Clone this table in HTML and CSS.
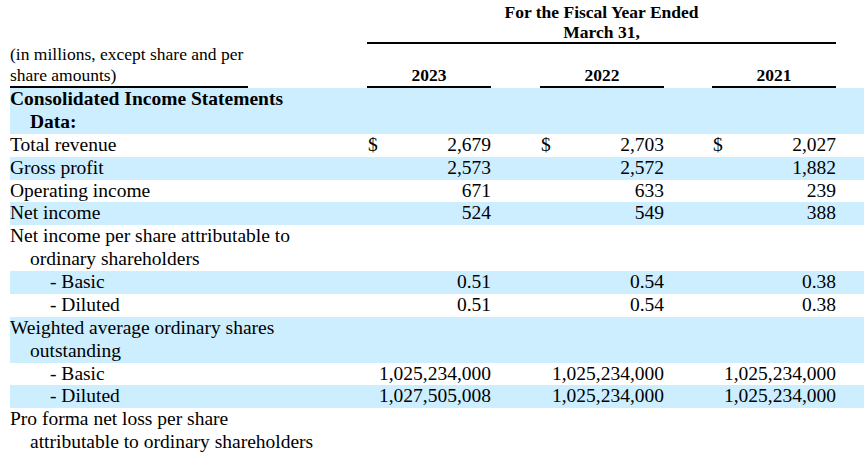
FILE: index.html
```html
<!DOCTYPE html>
<html lang="en">
<head>
<meta charset="utf-8">
<title>Selected Financial Data</title>
<link rel="stylesheet" href="styles.css">
</head>
<body>
<table class="fin">
  <colgroup>
    <col class="c-label">
    <col class="c-gap1">
    <col class="c-num">
    <col class="c-gap2">
    <col class="c-num">
    <col class="c-gap3">
    <col class="c-num">
    <col class="c-tail">
  </colgroup>
  <thead>
    <tr class="h1">
      <th colspan="2"></th>
      <th colspan="5" class="span-head">For the Fiscal Year Ended<br>March 31,</th>
      <th></th>
    </tr>
    <tr class="h2">
      <th class="unit">(in millions, except share and per share amounts)</th>
      <th></th>
      <th class="year">2023</th>
      <th></th>
      <th class="year">2022</th>
      <th></th>
      <th class="year">2021</th>
      <th></th>
    </tr>
  </thead>
  <tbody>
    <tr class="shade">
      <td colspan="2" class="label bold">Consolidated Income Statements<br>Data:</td>
      <td></td><td></td><td></td><td></td><td></td><td></td>
    </tr>
    <tr>
      <td colspan="2" class="label">Total revenue</td>
      <td><div class="amt"><span>$</span><span>2,679</span></div></td><td></td>
      <td><div class="amt"><span>$</span><span>2,703</span></div></td><td></td>
      <td><div class="amt"><span>$</span><span>2,027</span></div></td><td></td>
    </tr>
    <tr class="shade">
      <td colspan="2" class="label">Gross profit</td>
      <td class="num">2,573</td><td></td>
      <td class="num">2,572</td><td></td>
      <td class="num">1,882</td><td></td>
    </tr>
    <tr>
      <td colspan="2" class="label">Operating income</td>
      <td class="num">671</td><td></td>
      <td class="num">633</td><td></td>
      <td class="num">239</td><td></td>
    </tr>
    <tr class="shade">
      <td colspan="2" class="label">Net income</td>
      <td class="num">524</td><td></td>
      <td class="num">549</td><td></td>
      <td class="num">388</td><td></td>
    </tr>
    <tr>
      <td colspan="2" class="label">Net income per share attributable to<br>ordinary shareholders</td>
      <td></td><td></td><td></td><td></td><td></td><td></td>
    </tr>
    <tr class="shade">
      <td colspan="2" class="label sub">- Basic</td>
      <td class="num">0.51</td><td></td>
      <td class="num">0.54</td><td></td>
      <td class="num">0.38</td><td></td>
    </tr>
    <tr>
      <td colspan="2" class="label sub">- Diluted</td>
      <td class="num">0.51</td><td></td>
      <td class="num">0.54</td><td></td>
      <td class="num">0.38</td><td></td>
    </tr>
    <tr class="shade">
      <td colspan="2" class="label">Weighted average ordinary shares<br>outstanding</td>
      <td></td><td></td><td></td><td></td><td></td><td></td>
    </tr>
    <tr>
      <td colspan="2" class="label sub">- Basic</td>
      <td class="num">1,025,234,000</td><td></td>
      <td class="num">1,025,234,000</td><td></td>
      <td class="num">1,025,234,000</td><td></td>
    </tr>
    <tr class="shade">
      <td colspan="2" class="label sub">- Diluted</td>
      <td class="num">1,027,505,008</td><td></td>
      <td class="num">1,025,234,000</td><td></td>
      <td class="num">1,025,234,000</td><td></td>
    </tr>
    <tr>
      <td colspan="2" class="label">Pro forma net loss per share<br>attributable to ordinary shareholders</td>
      <td></td><td></td><td></td><td></td><td></td><td></td>
    </tr>
  </tbody>
</table>
</body>
</html>
```

FILE: styles.css
```css
html, body {
  margin: 0;
  padding: 0;
  background: #ffffff;
  overflow: hidden;
}

body {
  font-family: "Liberation Serif", "Times New Roman", serif;
  color: #000000;
}

.fin {
  margin-left: 10px;
  width: 854px;
  table-layout: fixed;
  border-collapse: separate;
  border-spacing: 0;
}

.c-label { width: 238px; }
.c-gap1 { width: 119px; }
.c-num { width: 124px; }
.c-gap2 { width: 49px; }
.c-gap3 { width: 48px; }
.c-tail { width: 28px; }

.fin th,
.fin td {
  padding: 0;
}

/* header */
.fin thead th {
  font-size: 17.5px;
  font-weight: bold;
  vertical-align: bottom;
}

.fin .h1 th {
  line-height: 20px;
}

.fin th.span-head {
  padding-top: 2px;
  text-align: center;
  border-bottom: 2px solid #000;
}

.fin .h2 th {
  line-height: 21px;
}

.fin thead th.unit {
  font-weight: normal;
  text-align: left;
  border-bottom: 2px solid #000;
}

.fin th.year {
  text-align: center;
  border-bottom: 2px solid #000;
}

/* body */
.fin tbody td {
  font-size: 19.5px;
  line-height: 22.875px;
  vertical-align: middle;
  white-space: nowrap;
}

.fin tbody tr.shade td {
  background: #cceeff;
}

.fin td.label {
  padding-left: 20px;
  text-indent: -20px;
  text-align: left;
}

.fin td.label.sub {
  padding-left: 40px;
  text-indent: 0;
}

.bold {
  font-weight: bold;
}

.num {
  text-align: right;
}

.amt {
  display: flex;
  justify-content: space-between;
  padding-left: 1px;
}
```
